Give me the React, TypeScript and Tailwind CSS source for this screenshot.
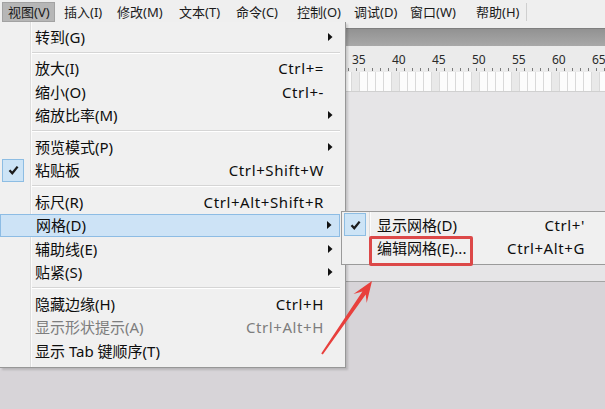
import React from 'react';

type Item =
  | { sep: true }
  | { label: string; keys?: string; arrow?: boolean; checked?: boolean; hot?: boolean; disabled?: boolean };

const menuItems: Item[] = [
  { label: '转到(G)', arrow: true },
  { sep: true },
  { label: '放大(I)', keys: 'Ctrl+=' },
  { label: '缩小(O)', keys: 'Ctrl+-' },
  { label: '缩放比率(M)', arrow: true },
  { sep: true },
  { label: '预览模式(P)', arrow: true },
  { label: '粘贴板', keys: 'Ctrl+Shift+W', checked: true },
  { sep: true },
  { label: '标尺(R)', keys: 'Ctrl+Alt+Shift+R' },
  { label: '网格(D)', arrow: true, hot: true },
  { label: '辅助线(E)', arrow: true },
  { label: '贴紧(S)', arrow: true },
  { sep: true },
  { label: '隐藏边缘(H)', keys: 'Ctrl+H' },
  { label: '显示形状提示(A)', keys: 'Ctrl+Alt+H', disabled: true },
  { label: '显示 Tab 键顺序(T)' },
];

const barItems = [
  { t: '视图(V)', w: 'w-[53px] mr-[4px]', on: true },
  { t: '插入(I)', w: 'w-[53px]' },
  { t: '修改(M)', w: 'w-[62px]' },
  { t: '文本(T)', w: 'w-[57px]' },
  { t: '命令(C)', w: 'w-[61px]' },
  { t: '控制(O)', w: 'w-[57px]' },
  { t: '调试(D)', w: 'w-[56px]' },
  { t: '窗口(W)', w: 'w-[66px]' },
  { t: '帮助(H)', w: 'w-[55px]' },
];

function Check() {
  return (
    <div className="w-[22px] h-[23px] shrink-0 flex items-center justify-center bg-[#cde4f6] border border-[#8dbde3]">
      <svg width="11" height="10" viewBox="0 0 11 10">
        <path d="M1.5 5.2 L4.3 8.2 L9.6 1.6" fill="none" stroke="#1c1c1c" strokeWidth="2.3" />
      </svg>
    </div>
  );
}

function Arrow() {
  return (
    <svg width="5" height="8" viewBox="0 0 5 8" className="ml-[4px]">
      <path d="M0 0 L4.5 4 L0 8 Z" fill="#111" />
    </svg>
  );
}

export default function App() {
  const cells = Array.from({ length: 76 }, (_, i) => i);
  // ruler labels only for the part that lies right of the open menu
  const labels = [35, 40, 45, 50, 55, 60, 65];

  return (
    <div className="relative w-[605px] h-[409px] overflow-hidden bg-[#d7d4d8] font-['Noto_Sans','Noto_Sans_CJK_SC',sans-serif] text-[#111]">
      {/* menu bar */}
      <div className="h-[22px] bg-[#efefef] flex items-stretch pl-[2px] pt-[2px] text-[13px] text-[#1a1a1a]">
        {barItems.map(b => (
          <div
            key={b.t}
            className={`${b.w} pl-[5px] flex items-center leading-[16px] ${b.on ? 'bg-[#b6b6b6] border border-[#a2a2a2] pl-[4px]' : ''}`}
          >
            {b.t}
          </div>
        ))}
        <div className="w-px my-[1px] bg-[#cfcfcf]" />
      </div>

      {/* workspace behind the menus */}
      <div className="flex flex-col h-[387px]">
        <div className="h-[6px] shrink-0 bg-[#efefef]" />
        <div className="h-[18px] shrink-0 bg-[linear-gradient(#929292,#a8a8a8)] border-t border-[#7f7f7f]" />
        <div className="h-[26px] shrink-0 bg-[#ebebeb] flex flex-col">
          <div className="flex pl-[352px] pt-[7px] h-[21px] text-[12px] leading-[14px] text-[#2a2a2a]">
            {labels.map(n => (
              <div key={n} className="w-[40px] shrink-0">{n}</div>
            ))}
          </div>
          <div className="flex h-[3px] mt-[1px]">
            {cells.map(i => (
              <div key={i} className="w-[8px] shrink-0 flex justify-center">
                <div className="w-px h-full bg-[#7a7a7a]" />
              </div>
            ))}
          </div>
        </div>
        <div className="h-[20px] shrink-0 flex bg-white border-b border-[#d0d0d0]">
          {cells.map(i => (
            <div
              key={i}
              className={`w-[8px] shrink-0 border-r border-[#d9d9d9] ${i % 5 === 4 ? 'bg-[#e9e9e9]' : 'bg-[#fcfcfc]'}`}
            />
          ))}
        </div>
        <div className="h-[190px] shrink-0 bg-[#e6e5e7] border-b border-[#a4a4a4]" />
        <div className="flex-1 bg-[#d7d4d8]" />
      </div>

      {/* 视图 dropdown */}
      <div className="absolute left-0 top-[22px] w-[346px] h-[346px] bg-[#f0f0f0] border-r border-b border-[#979797] pt-[3px] shadow-[2px_2px_2px_rgba(0,0,0,0.15)]">
        <div className="absolute left-[30px] top-0 bottom-0 w-[2px] border-l border-[#dddddd] bg-white/70" />
        {menuItems.map((it, idx) =>
          'sep' in it ? (
            <div key={idx} className="h-[8px] flex items-center pl-[32px] pr-[5px]">
              <div className="w-full h-[2px] border-t border-[#d5d5d5] bg-white" />
            </div>
          ) : (
            <div
              key={idx}
              className={`relative h-[23.5px] mr-[5px] flex items-center text-[15px] leading-[18px] ${
                it.hot ? 'bg-[#cde3f6] border border-[#8dbce4]' : ''
              } ${it.disabled ? 'text-[#7d7d7d]' : 'text-[#0d0d0d]'}`}
            >
              <div className="w-[35px] shrink-0 pl-[2px] flex items-center">{it.checked && <Check />}</div>
              <div className="flex-1 whitespace-nowrap">{it.label}</div>
              <div className="whitespace-nowrap tracking-[0.6px]">{it.keys}</div>
              <div className="w-[16px] shrink-0 flex items-center">{it.arrow && <Arrow />}</div>
            </div>
          )
        )}
      </div>

      {/* 网格 submenu */}
      <div className="absolute left-[341px] top-[211px] w-[290px] h-[54px] bg-[#f0f0f0] border border-[#9a9a9a] pt-[1px] text-[15px] leading-[18px] text-[#0d0d0d]">
        <div className="absolute left-[27px] top-0 bottom-0 w-[2px] border-l border-[#dddddd] bg-white/70" />
        <div className="h-[23.5px] flex items-center pl-[2px]">
          <Check />
          <div className="ml-[11px] w-[208px] flex justify-between whitespace-nowrap">
            <span>显示网格(D)</span>
            <span className="tracking-[0.6px]">Ctrl+'</span>
          </div>
        </div>
        <div className="h-[23.5px] flex items-center pl-[35px]">
          <div className="w-[208px] flex justify-between whitespace-nowrap">
            <span>编辑网格(E)...</span>
            <span className="tracking-[0.6px]">Ctrl+Alt+G</span>
          </div>
        </div>
      </div>

      {/* highlight box */}
      <div className="absolute left-[369px] top-[236px] w-[104px] h-[30px] border-[3px] border-[#dc4848] rounded-[2px]" />

      {/* arrow */}
      <svg className="absolute left-0 top-0 pointer-events-none" width="605" height="409" viewBox="0 0 605 409">
        <polygon
          points="372,281 366.7,302.9 365.7,294.5 322.8,354.6 321.2,353.4 362.4,291.4 353.5,293.9"
          fill="#e8403d"
        />
      </svg>
    </div>
  );
}
